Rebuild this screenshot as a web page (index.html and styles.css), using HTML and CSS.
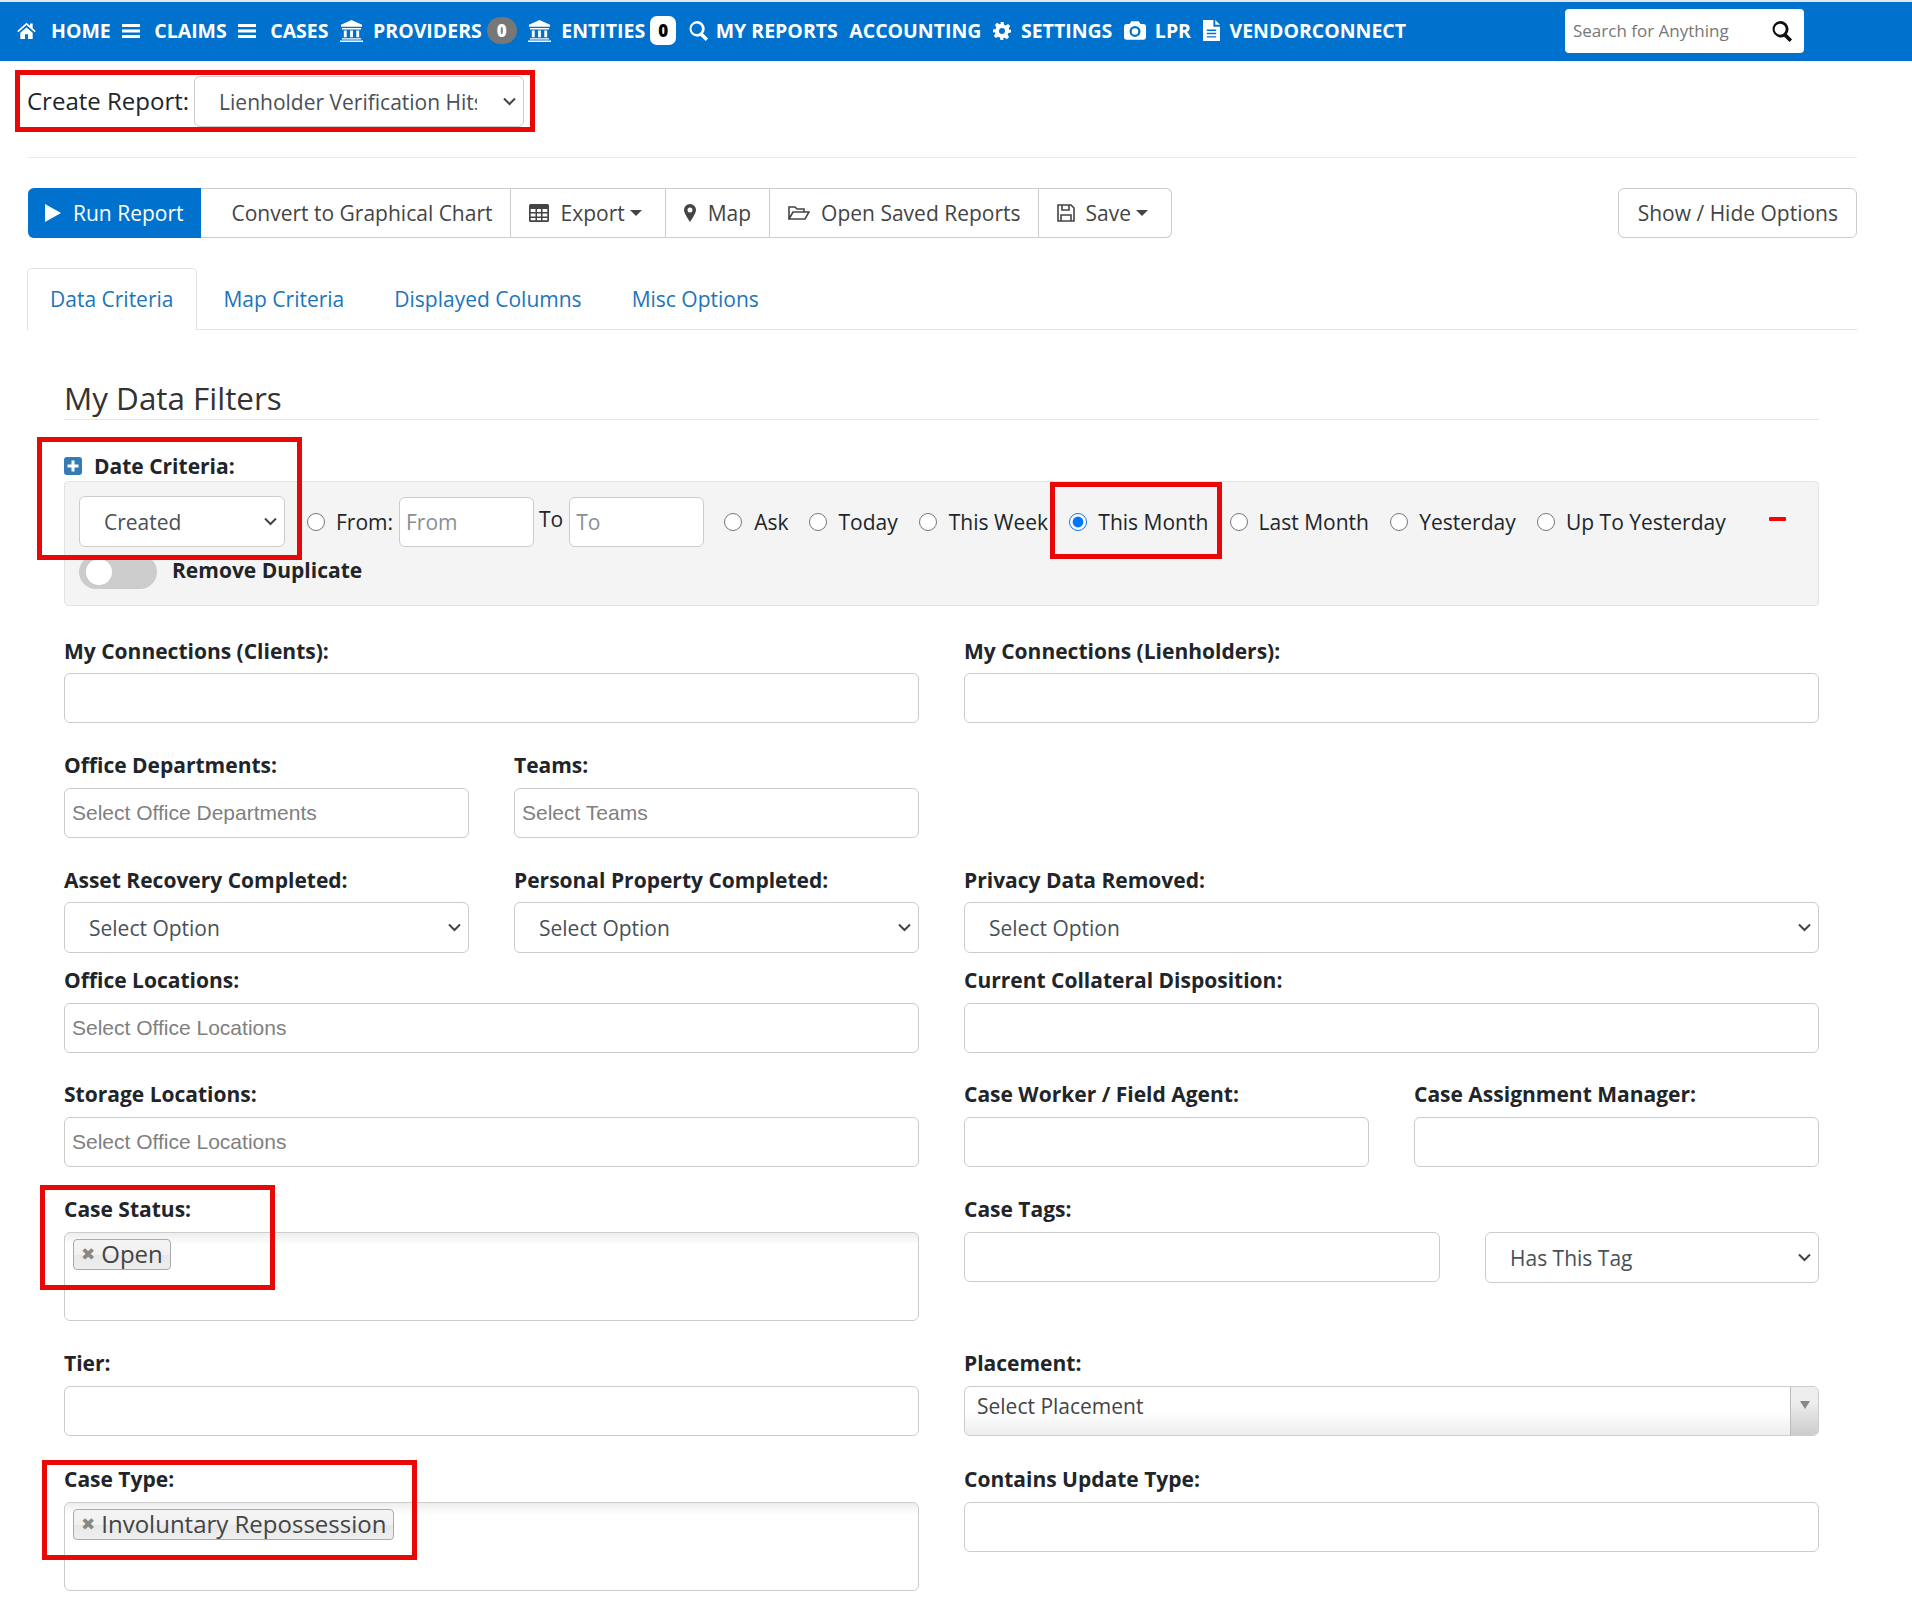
FILE: index.html
```html
<!DOCTYPE html>
<html lang="en">
<head>
<meta charset="utf-8">
<title>Create Report</title>
<link rel="stylesheet" href="styles.css">
</head>
<body>
<svg class="defs" width="0" height="0" aria-hidden="true">
  <symbol id="i-bars" viewBox="0 0 18 16"><path d="M0 1h18v3H0zM0 6.500h18v3H0zM0 12h18v3H0z"/></symbol>
  <symbol id="i-bank" viewBox="0 0 24 24"><path d="M12 1 1 6v2h22V6zM2 9.500h20V11H2zM4 12h3v7H4zM10.500 12h3v7h-3zM17 12h3v7h-3zM2 20h20v1.500H2zM0 22.500h24V24H0z"/></symbol>
  <symbol id="i-search" viewBox="0 0 24 24"><path fill-rule="evenodd" d="M10 1a9 9 0 0 1 7.200 14.400l5.800 5.800-2.800 2.800-5.800-5.800A9 9 0 1 1 10 1zm0 3a6 6 0 1 0 0 12 6 6 0 0 0 0-12z"/></symbol>
</svg>

<nav class="navbar">
  <a class="nav-item nav-home"><svg class="ic ic-home" viewBox="0 0 24 22"><path d="M12 1 0 11.500l1.500 1.700L12 4l10.500 9.200 1.500-1.700-4-3.500V2h-3.500v2.900zM4 14v8h6v-6h4v6h6v-8l-8-7z"/></svg><span>HOME</span></a>
  <a class="nav-item"><svg class="ic ic-bars"><use href="#i-bars"/></svg><span>CLAIMS</span></a>
  <a class="nav-item"><svg class="ic ic-bars"><use href="#i-bars"/></svg><span>CASES</span></a>
  <a class="nav-item"><svg class="ic ic-bank"><use href="#i-bank"/></svg><span>PROVIDERS</span><b class="badge badge-grey">0</b></a>
  <a class="nav-item"><svg class="ic ic-bank"><use href="#i-bank"/></svg><span>ENTITIES</span><b class="badge badge-white">0</b></a>
  <a class="nav-item"><svg class="ic ic-search"><use href="#i-search"/></svg><span>MY REPORTS</span></a>
  <a class="nav-item"><span>ACCOUNTING</span></a>
  <a class="nav-item"><svg class="ic ic-gear" viewBox="0 0 24 24"><path fill-rule="evenodd" d="M10 0h4l.8 3.500 2.300 1 3-1.900 2.800 2.800-1.900 3 1 2.300L24 10v4l-3.500.8-1 2.300 1.900 3-2.800 2.800-3-1.900-2.300 1L14 24h-4l-.8-3.500-2.300-1-3 1.900-2.800-2.800 1.900-3-1-2.300L0 14v-4l3.500-.8 1-2.300-1.900-3 2.800-2.800 3 1.900 2.300-1zm2 8a4 4 0 1 0 0 8 4 4 0 0 0 0-8z"/></svg><span>SETTINGS</span></a>
  <a class="nav-item"><svg class="ic ic-camera" viewBox="0 0 24 20"><path fill-rule="evenodd" d="M8 0h8l2 3h3a3 3 0 0 1 3 3v11a3 3 0 0 1-3 3H3a3 3 0 0 1-3-3V6a3 3 0 0 1 3-3h3zm4 5a6 6 0 1 0 0 12 6 6 0 0 0 0-12zm0 2.500a3.500 3.500 0 1 1 0 7 3.500 3.500 0 0 1 0-7z"/></svg><span>LPR</span></a>
  <a class="nav-item"><svg class="ic ic-file" viewBox="0 0 18 22"><path fill-rule="evenodd" d="M0 0h11v7h7v15H0zM13 0l5 5h-5zM4 10v1.500h10V10zm0 3.500V15h10v-1.500zM4 17v1.500h10V17z"/></svg><span>VENDORCONNECT</span></a>
  <div class="nav-search">
    <span class="nav-search-text">Search for Anything</span>
    <svg class="ic-find"><use href="#i-search"/></svg>
  </div>
</nav>

<main class="page">
  <div class="create-row">
    <label class="create-label">Create Report:</label>
    <select class="ctl-select create-select"><option>Lienholder Verification Hits</option></select>
  </div>
  <hr class="rule">

  <div class="toolbar">
    <div class="btn-group">
      <button class="btn btn-primary"><svg class="btn-ic ic-play" viewBox="0 0 16 18"><path d="M0 0v18l16-9z"/></svg>Run Report</button>
      <button class="btn btn-convert">Convert to Graphical Chart</button>
      <button class="btn btn-menu"><svg class="btn-ic ic-table" viewBox="0 0 20 18"><path fill-rule="evenodd" d="M1.500 0h17A1.500 1.500 0 0 1 20 1.500v15a1.500 1.500 0 0 1-1.500 1.500h-17A1.500 1.500 0 0 1 0 16.500v-15A1.500 1.500 0 0 1 1.500 0zm.2 5v3h4.800V5zm6.300 0v3h4V5zm5.500 0v3h4.800V5zM1.700 9.500v3h4.800v-3zm6.300 0v3h4v-3zm5.500 0v3h4.800v-3zM1.700 14v2.300h4.800V14zm6.300 0v2.300h4V14zm5.500 0v2.300h4.800V14z"/></svg>Export<i class="caret"></i></button>
      <button class="btn"><svg class="btn-ic ic-pin" viewBox="0 0 12 18"><path fill-rule="evenodd" d="M6 0a6 6 0 0 1 6 6c0 3-4 9-6 12C4 15 0 9 0 6a6 6 0 0 1 6-6zm0 3.500a2.500 2.500 0 1 0 0 5 2.500 2.500 0 0 0 0-5z"/></svg>Map</button>
      <button class="btn btn-open"><svg class="btn-ic ic-folder" viewBox="0 0 22 16" fill="none" stroke="currentColor" stroke-width="1.600"><path d="M1 14V2h6l2 2h7v3M1 14l4-7h16l-4 7z"/></svg>Open Saved Reports</button>
      <button class="btn btn-menu"><svg class="btn-ic ic-save" viewBox="0 0 18 18" fill="none" stroke="currentColor" stroke-width="1.600"><path d="M1 1h13l3 3v13H1zM5 1v5h7V1M4 17v-6h10v6"/></svg>Save<i class="caret"></i></button>
    </div>
    <button class="btn btn-solo">Show / Hide Options</button>
  </div>

  <ul class="tabs">
    <li class="tab tab-active">Data Criteria</li>
    <li class="tab">Map Criteria</li>
    <li class="tab">Displayed Columns</li>
    <li class="tab">Misc Options</li>
  </ul>

  <section class="filters">
    <h2 class="filters-title">My Data Filters</h2>
    <div class="date-label"><svg class="ic-plus" viewBox="0 0 18 18"><path fill-rule="evenodd" d="M3 0h12a3 3 0 0 1 3 3v12a3 3 0 0 1-3 3H3a3 3 0 0 1-3-3V3a3 3 0 0 1 3-3zm4.500 3.500v4h-4v3h4v4h3v-4h4v-3h-4v-4z"/></svg>Date Criteria:</div>
    <div class="date-box">
      <div class="date-row">
        <select class="ctl-select date-select"><option>Created</option></select>
        <label class="radio radio-from"><input type="radio" name="range">From:</label>
        <input class="ctl date-input" placeholder="From">
        <span class="to-label">To</span>
        <input class="ctl date-input" placeholder="To">
        <label class="radio"><input type="radio" name="range">Ask</label>
        <label class="radio"><input type="radio" name="range">Today</label>
        <label class="radio radio-week"><input type="radio" name="range">This Week</label>
        <label class="radio radio-snug"><input type="radio" name="range" checked>This Month</label>
        <label class="radio radio-snug"><input type="radio" name="range">Last Month</label>
        <label class="radio radio-snug"><input type="radio" name="range">Yesterday</label>
        <label class="radio radio-snug"><input type="radio" name="range">Up To Yesterday</label>
        <span class="minus"></span>
      </div>
      <div class="dup-row">
        <span class="toggle"><span class="knob"></span></span>
        <strong class="dup-text">Remove Duplicate</strong>
      </div>
    </div>

    <div class="row row-first">
      <div class="field"><label>My Connections (Clients):</label><div class="ctl"></div></div>
      <div class="field"><label>My Connections (Lienholders):</label><div class="ctl"></div></div>
    </div>

    <div class="row">
      <div class="sub">
        <div class="field"><label>Office Departments:</label><div class="ctl ph">Select Office Departments</div></div>
        <div class="field"><label>Teams:</label><div class="ctl ph">Select Teams</div></div>
      </div>
      <div></div>
    </div>

    <div class="row row-select">
      <div class="sub">
        <div class="field"><label>Asset Recovery Completed:</label><select class="ctl-select"><option>Select Option</option></select></div>
        <div class="field"><label>Personal Property Completed:</label><select class="ctl-select"><option>Select Option</option></select></div>
      </div>
      <div class="field"><label>Privacy Data Removed:</label><select class="ctl-select"><option>Select Option</option></select></div>
    </div>

    <div class="row row-after-select">
      <div class="field"><label>Office Locations:</label><div class="ctl ph">Select Office Locations</div></div>
      <div class="field"><label>Current Collateral Disposition:</label><div class="ctl"></div></div>
    </div>

    <div class="row row-snug">
      <div class="field"><label>Storage Locations:</label><div class="ctl ph">Select Office Locations</div></div>
      <div class="sub">
        <div class="field"><label>Case Worker / Field Agent:</label><div class="ctl"></div></div>
        <div class="field"><label>Case Assignment Manager:</label><div class="ctl"></div></div>
      </div>
    </div>

    <div class="row">
      <div class="field"><label>Case Status:</label><div class="ctl multi"><span class="tag"><i class="tag-x">✖</i>Open</span></div></div>
      <div class="tags-pair">
        <div class="field"><label>Case Tags:</label><div class="ctl"></div></div>
        <div class="field field-nolabel"><select class="ctl-select"><option>Has This Tag</option></select></div>
      </div>
    </div>

    <div class="row">
      <div class="field"><label>Tier:</label><div class="ctl"></div></div>
      <div class="field"><label>Placement:</label><div class="ctl chosen"><span class="chosen-text">Select Placement</span><span class="chosen-arrow"><i class="chosen-tri"></i></span></div></div>
    </div>

    <div class="row row-last">
      <div class="field"><label>Case Type:</label><div class="ctl multi"><span class="tag"><i class="tag-x">✖</i>Involuntary Repossession</span></div></div>
      <div class="field"><label>Contains Update Type:</label><div class="ctl"></div></div>
    </div>
  </section>
</main>

<div class="mark mark-create"></div>
<div class="mark mark-date"></div>
<div class="mark mark-month"></div>
<div class="mark mark-status"></div>
<div class="mark mark-type"></div>
</body>
</html>
```

FILE: styles.css
```css
* { box-sizing: border-box; }
html, body { margin: 0; padding: 0; background: #fff; }
body { font-family: "Open Sans", sans-serif; font-size: 21px; color: #212529; position: relative; }
.defs { position: absolute; }

/* navbar */
.navbar { height: 61px; border-top: 2px solid #dfe5e8; background: #0072ce; color: #fff; display: flex; align-items: center; padding: 0 0 2px 17px; }
.nav-item { display: flex; align-items: center; font-weight: 700; font-size: 19.500px; margin-right: 11.500px; white-space: nowrap; }
.nav-item .ic { fill: #fff; display: block; flex: none; }
.ic-home { width: 19px; height: 17px; margin-right: 15px; }
.ic-bars { width: 18px; height: 16px; margin-right: 14px; }
.ic-bank { width: 23px; height: 23px; margin-right: 10px; }
.ic-search { width: 21px; height: 21px; margin-right: 7px; }
.ic-gear { width: 18px; height: 18px; margin-right: 10px; }
.ic-camera { width: 22px; height: 19px; margin-right: 9px; }
.ic-file { width: 17px; height: 21px; margin-right: 10px; }
.badge { display: flex; align-items: center; justify-content: center; font-size: 17px; margin-left: 5px; height: 27px; }
.badge-grey { width: 30px; border-radius: 14px; background: #777; color: #fff; }
.badge-white { width: 26px; border-radius: 7px; background: #fff; color: #000; height: 29px; }
.nav-search { margin-left: auto; margin-right: 108px; width: 239px; height: 44px; background: #fff; border-radius: 4px; display: flex; align-items: center; justify-content: space-between; padding: 0 11px 0 8px; }
.nav-search-text { color: #777; font-size: 17px; }
.ic-find { width: 22px; height: 22px; fill: #111; }

/* page */
.page { padding: 15px 55px 18px 28px; }
.create-row { display: flex; align-items: center; height: 51px; }
.create-label { font-size: 24px; margin-left: -1px; margin-right: 5px; white-space: nowrap; position: relative; bottom: 1px; }
.rule { border: 0; border-top: 1px solid #e9e9e9; margin: 30px 0; }

.toolbar { display: flex; justify-content: space-between; height: 50px; }
.btn-group { display: flex; }
.btn { font: inherit; color: #444; background: #fff; border: 1px solid #ccc; border-left: 0; padding: 0 18px; display: flex; align-items: center; white-space: nowrap; }
.btn-group .btn:last-child { border-radius: 0 6px 6px 0; }
.btn-primary { background: #0072ce; border-color: #0072ce; color: #fff; border-radius: 6px 0 0 6px; padding: 0 17px; }
.btn-convert { padding-left: 30px; padding-right: 18px; }
.btn-menu { padding-right: 23px; }
.btn-open { padding-right: 17px; }
.btn-solo { border-left: 1px solid #ccc; border-radius: 6px; padding-left: 19px; }
.btn-ic { display: block; margin-right: 11px; fill: currentColor; }
.ic-play { width: 16px; height: 18px; margin-right: 12px; }
.ic-table { width: 20px; height: 18px; }
.ic-pin { width: 12px; height: 18px; margin-right: 12px; }
.ic-folder { width: 22px; height: 16px; fill: none; }
.ic-save { width: 18px; height: 18px; fill: none; }
.caret { display: block; width: 0; height: 0; border: 6px solid transparent; border-top-color: currentColor; border-bottom: 0; margin-left: 5px; }

.tabs { list-style: none; display: flex; margin: 30px 0 0; padding: 0; height: 62px; border-bottom: 1px solid #dee2e6; }
.tab { color: #1c75bc; padding: 0 25px; display: flex; align-items: center; }
.tab-active { margin-left: -1px; margin-right: 1px; padding: 0 23px 2px 22px; border: 1px solid #dee2e6; border-bottom: 0; background: #fff; border-radius: 5px 5px 0 0; height: 62px; }

.filters { padding: 0 38px 0 36px; }
.filters-title { font-size: 31.400px; font-weight: 400; color: #333; margin: 48px 0 0; line-height: 40px; border-bottom: 1px solid #e4e4e4; height: 42px; }
.date-label { font-weight: 700; height: 30px; line-height: 30px; margin-top: 31px; display: flex; align-items: center; }
.ic-plus { width: 18px; height: 18px; fill: #337ab7; margin-right: 12px; }
.date-box { background: #f4f4f4; border: 1px solid #e4e4e4; border-radius: 4px; padding: 14px 14px 13px; height: 125px; }
.date-row { display: flex; align-items: center; height: 51px; }
.radio { display: flex; align-items: center; margin-left: 20px; white-space: nowrap; }
.radio input { width: 18px; height: 18px; margin: 0 12px 0 0; flex: none; }
.radio-from { margin-left: 22px; }
.radio-from input { margin-right: 11px; }
.radio-week { margin-left: 21px; }
.radio-snug { margin-left: 21.300px; }
.radio-snug input { margin-right: 11px; }
.date-input { width: 135px; margin-left: 6px; height: 50px; padding: 0 6px; font: inherit; }
.date-input::placeholder { color: #8a8f94; opacity: 1; }
.to-label { margin-left: 5px; position: relative; bottom: 3px; }
.minus { width: 17px; height: 4px; background: #f00; margin-left: auto; margin-right: 18px; border-radius: 1px; position: relative; bottom: 3px; }
.dup-row { display: flex; align-items: center; margin-top: 8px; height: 34px; }
.toggle { display: block; width: 78px; height: 34px; background: #ccc; border-radius: 17px; padding: 4px 0 4px 7px; }
.knob { display: block; width: 26px; height: 26px; background: #fff; border-radius: 50%; }
.dup-text { margin-left: 15px; position: relative; bottom: 2px; }

/* form rows */
.row { display: grid; grid-template-columns: 1fr 1fr; column-gap: 45px; margin-top: 27px; }
.row-first { margin-top: 29px; }
.row-first label { position: relative; top: 1px; }
.row-select .field label { margin-bottom: 7px; }
.row-after-select { margin-top: 12px; }
.row-snug { margin-top: 26px; }
.row-last { margin-top: 28px; }
.sub { display: grid; grid-template-columns: 1fr 1fr; column-gap: 45px; }
.tags-pair { display: grid; grid-template-columns: 476px 1fr; column-gap: 45px; }
.field label { display: block; font-weight: 700; line-height: 30px; margin-bottom: 8px; white-space: nowrap; }
.field-nolabel { padding-top: 38px; }
.ctl { height: 50px; background: #fff; border: 1px solid #ccc; border-radius: 6px; display: block; color: #495057; }
.ctl-select {
  appearance: none;
  width: 100%; height: 51px; border: 1px solid #ccc; border-radius: 6px; font: inherit; color: #495057; padding: 0 46px 0 24px;
  background: #fff url("data:image/svg+xml,%3Csvg xmlns='http://www.w3.org/2000/svg' width='13' height='9' viewBox='0 0 13 9'%3E%3Cpath d='M1 1.500l5.500 5.500L12 1.500' fill='none' stroke='%23444' stroke-width='2'/%3E%3C/svg%3E") no-repeat right 7px center;
}
.create-select { width: 330px; }
.date-select { width: 206px; flex: none; }
.ph { font-family: "Liberation Sans", Arial, sans-serif; color: #808080; line-height: 48px; padding-left: 7px; }
.multi { height: 89px; padding: 4px 8px; background: linear-gradient(#eee 0, #fff 12px, #fff 100%); }
.tag { display: inline-flex; align-items: center; height: 31px; padding: 0 7px 3px; border: 1px solid #aaa; border-radius: 4px; background: linear-gradient(#f4f4f4 0, #f1f1f1 50%, #e8e8e8 51%, #eee 100%); font-size: 24px; color: #444; white-space: nowrap; }
.tag-x { font-style: normal; color: #888; font-size: 17px; margin-right: 6px; font-family: "DejaVu Sans", sans-serif; position: relative; top: 1px; }
.chosen { display: flex; justify-content: space-between; background: linear-gradient(#fff 0, #fff 50%, #eee 100%); overflow: hidden; }
.chosen-text { color: #444; padding-left: 12px; line-height: 38px; }
.chosen-arrow { width: 28px; border-left: 1px solid #bbb; background: linear-gradient(#eee 0, #eee 30%, #ccc 100%); display: flex; justify-content: center; padding-top: 14px; }
.chosen-tri { display: block; width: 0; height: 0; border: 5px solid transparent; border-top: 8px solid #888; border-bottom: 0; }

/* red review marks, drawn over the screen */
.mark { position: absolute; border: 5px solid #e80808; pointer-events: none; }
.mark-create { left: 15px; top: 70px; width: 520px; height: 62px; }
.mark-date { left: 37px; top: 437px; width: 265px; height: 123px; }
.mark-month { left: 1050px; top: 482px; width: 172px; height: 77px; }
.mark-status { left: 40px; top: 1185px; width: 235px; height: 105px; }
.mark-type { left: 42px; top: 1460px; width: 375px; height: 100px; }
```
